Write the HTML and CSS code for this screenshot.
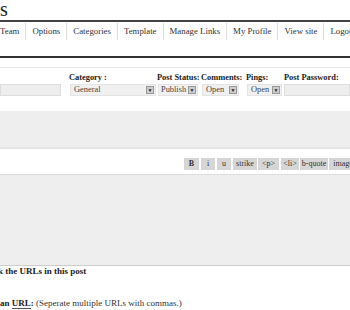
FILE: index.html
```html
<!DOCTYPE html>
<html lang="en">
<head>
    <meta charset="UTF-8">
    <meta name="viewport" content="width=device-width, initial-scale=1.0">
    <title>Write Post</title>
    <link rel="stylesheet" href="styles.css">
</head>
<body>
    <div class="page">
        <div class="header">
            <h1>s</h1>
        </div>

        <ul class="menu">
            <li>Team</li>
            <li>Options</li>
            <li>Categories</li>
            <li>Template</li>
            <li>Manage Links</li>
            <li>My Profile</li>
            <li>View site</li>
            <li>Logout</li>
        </ul>

        <div class="wrap">
            <div class="post-meta">
                <div class="field f-title">
                    <label>&nbsp;</label>
                    <input type="text" class="input-title">
                </div>
                <div class="field f-cat">
                    <label>Category :</label>
                    <div class="select sel-cat">General<span class="arrow">&#9660;</span></div>
                </div>
                <div class="field f-status">
                    <label>Post Status:</label>
                    <div class="select sel-status">Publish<span class="arrow">&#9660;</span></div>
                </div>
                <div class="field f-comments">
                    <label>Comments:</label>
                    <div class="select sel-comments">Open<span class="arrow">&#9660;</span></div>
                </div>
                <div class="field f-pings">
                    <label>Pings:</label>
                    <div class="select sel-pings">Open<span class="arrow">&#9660;</span></div>
                </div>
                <div class="field f-pass">
                    <label>Post Password:</label>
                    <input type="text" class="input-pass">
                </div>
            </div>

            <div class="excerpt"></div>

            <div class="toolbar">
                <span class="btn w15 btn-b">B</span>
                <span class="btn w14">i</span>
                <span class="btn w14">u</span>
                <span class="btn w24">strike</span>
                <span class="btn w21">&lt;p&gt;</span>
                <span class="btn w18">&lt;li&gt;</span>
                <span class="btn w28">b-quote</span>
                <span class="btn w28">image</span>
            </div>

            <div class="content"></div>

            <p class="pingback">k the URLs in this post</p>

            <p class="trackback"><strong>an <abbr>URL</abbr>:</strong> (Seperate multiple URLs with commas.)</p>
            <div class="trackback-input"></div>
        </div>
    </div>
</body>
</html>
```

FILE: styles.css
```css
* {
    margin: 0;
    padding: 0;
    box-sizing: border-box;
}

body {
    font-family: 'Liberation Serif', 'Times New Roman', serif;
    font-size: 9px;
    color: #333;
    background: #fff;
    overflow: hidden;
}

.page {
    width: 350px;
}

.header {
    height: 22px;
    border-bottom: 2px solid #444;
}

.header h1 {
    font-size: 20px;
    font-weight: normal;
    line-height: 18px;
    color: #222;
}

.menu {
    list-style: none;
    display: flex;
    height: 19px;
    align-items: center;
    white-space: nowrap;
    font-size: 8.8px;
}

.menu li {
    padding: 0 6px;
    border-right: 1px solid #ddd;
    line-height: 17px;
    color: #333;
}

.menu li:first-child {
    padding-left: 0;
}

.wrap {
    margin-top: 15px;
    border-top: 2px solid #333;
}

.post-meta {
    display: flex;
    border-top: 1px solid #e6e6e6;
    margin-top: 9px;
    padding-top: 5px;
    height: 44px;
}

.field {
    display: flex;
    flex-direction: column;
    flex-shrink: 0;
}

.field label {
    font-weight: bold;
    font-size: 8.4px;
    color: #222;
    line-height: 10px;
    height: 11px;
    white-space: nowrap;
}

.f-title { width: 69px; }
.f-cat { width: 88px; }
.f-status { width: 44px; }
.f-comments { width: 45px; }
.f-pings { width: 38px; }
.f-pass { width: 66px; }

.input-title {
    width: 61px;
    height: 12px;
    border: 1px solid #ddd;
    background: #eee;
}

.input-pass {
    width: 66px;
    height: 12px;
    border: 1px solid #ddd;
    background: #eee;
}

.select {
    position: relative;
    height: 12px;
    line-height: 10px;
    padding-left: 3px;
    margin-left: 1px;
    border: 1px solid #e4e4e4;
    background: #f0f0f0;
    color: #444;
    font-size: 8.4px;
    overflow: hidden;
    white-space: nowrap;
}

.arrow {
    position: absolute;
    right: 1px;
    top: 1px;
    width: 8px;
    height: 8px;
    font-size: 5px;
    line-height: 8px;
    text-align: center;
    background: #ccc;
    border: 1px solid #999;
    color: #222;
}

.sel-cat { width: 86px; }
.sel-status { width: 40px; padding-left: 2px; }
.sel-comments { width: 37px; }
.sel-pings { width: 35px; }

.excerpt {
    height: 38px;
    background: #eee;
    border-bottom: 2px solid #e4e4e4;
}

.toolbar {
    display: flex;
    gap: 1px;
    padding: 9px 0 4px 184px;
    border-bottom: 1px solid #ddd;
    white-space: nowrap;
}

.btn {
    display: block;
    flex-shrink: 0;
    height: 12px;
    line-height: 12px;
    text-align: center;
    background: #d6d6d6;
    color: #333;
    font-size: 8px;
}

.btn-b {
    font-weight: bold;
}

.w14 { width: 14px; margin-left: 1px; }
.w15 { width: 15px; }
.w18 { width: 18px; margin-left: 1px; }
.w21 { width: 21px; }
.w24 { width: 24px; margin-left: 1px; }
.w28 { width: 28px; }

.content {
    height: 91px;
    background: #eee;
    border-bottom: 1px solid #ccc;
}

.pingback {
    font-weight: bold;
    color: #222;
    line-height: 11px;
    margin-top: 0;
    text-indent: -2px;
}

.trackback {
    margin-top: 21px;
    line-height: 11px;
    color: #333;
}

.trackback strong {
    color: #222;
}

.trackback abbr {
    text-decoration: none;
    border-bottom: 1px solid #555;
}

.trackback-input {
    width: 175px;
    height: 6px;
    margin-top: 2px;
    border-top: 1px solid #ddd;
}
```
